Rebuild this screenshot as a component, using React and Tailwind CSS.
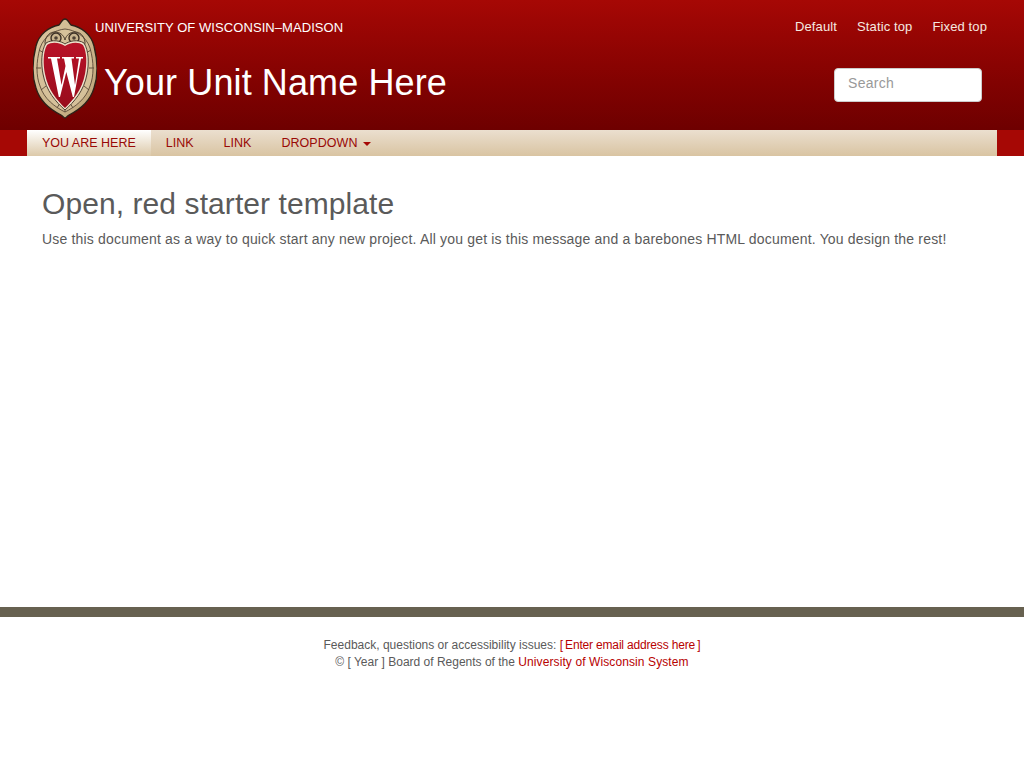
const Crest = () => (
  <svg width="64" height="102" viewBox="0 0 64 102" className="block">
    <defs>
      <linearGradient id="sh" x1="0" y1="0" x2="0" y2="1">
        <stop offset="0" stopColor="#b81228" />
        <stop offset="1" stopColor="#980c1c" />
      </linearGradient>
      <linearGradient id="tan" x1="0" y1="0" x2="1" y2="1">
        <stop offset="0" stopColor="#dcc8a2" />
        <stop offset="1" stopColor="#bda478" />
      </linearGradient>
    </defs>
    <path d="M32 1C29 1 28 5 26 7C16 9 6 16 3 28C-1 44 -1 58 3 70C7 84 18 92 28 97C30 98 31 100 32 100C33 100 34 98 36 97C46 92 57 84 61 70C65 58 65 44 61 28C58 16 48 9 38 7C36 5 35 1 32 1Z" fill="url(#tan)" stroke="#2c2118" strokeWidth="1.3" />
    <path d="M32 11C22 12 11 18 7 30C3 44 3 58 7 68C11 81 22 89 32 94C42 89 53 81 57 68C61 58 61 44 57 30C53 18 42 12 32 11Z" fill="#d6c19a" stroke="#5a4a38" strokeWidth="0.9" />
    <path d="M3 50H8M61 50H56M6 32L11 35M58 32L53 35M8 72L13 68M56 72L51 68M24 90L27 85M40 90L37 85M32 94V89" stroke="#5a4a38" strokeWidth="0.9" fill="none" />
    <path d="M32 22C30 12 14 10 12 24C12 28 14 30 17 30M32 22C34 12 50 10 52 24C52 28 50 30 47 30" fill="none" stroke="#4a3c2d" strokeWidth="1" />
    <circle cx="23" cy="20" r="5" fill="#c9b48e" stroke="#3d3126" strokeWidth="1.4" />
    <circle cx="41" cy="20" r="5" fill="#c9b48e" stroke="#3d3126" strokeWidth="1.4" />
    <circle cx="23" cy="20" r="1.8" fill="#4d4034" />
    <circle cx="41" cy="20" r="1.8" fill="#4d4034" />
    <path d="M32 26C28 23 19 21 13 25C8 33 8 46 10 56C13 73 23 84 32 92C41 84 51 73 54 56C56 46 56 33 51 25C45 21 36 23 32 26Z" fill="#efe4cd" stroke="#3d3126" strokeWidth="0.9" />
    <path d="M32 28C28 25 19 23 14 27C10 34 10 46 12 56C15 72 24 82 32 90C40 82 49 72 52 56C54 46 54 34 50 27C45 23 36 25 32 28Z" fill="url(#sh)" />
    <path d="M15 39H27V40.5H24L28.5 67L32.5 48L31 40.5H29V39H41V40.5H38.5L42 67L46 40.5H43V39H50V40.5H48L41 79H39.8L33.3 54L27 79H25.8L18 40.5H15Z" fill="#ffffff" />
  </svg>
);

export default function App() {
  return (
    <div className="min-h-screen bg-white font-['Liberation_Sans',Arial,sans-serif] text-[#5a5a5a]">
      <header className="h-[130px] bg-gradient-to-b from-[#a60805] to-[#6e0000] flex justify-between">
        <div className="flex items-start pl-[33px] pt-[18px]">
          <Crest />
          <div className="text-white">
            <div className="ml-[-2px] mt-[2px] text-[13px] leading-4 tracking-[0.07px] whitespace-nowrap">UNIVERSITY OF WISCONSIN–MADISON</div>
            <div className="ml-[7px] mt-[27px] text-[36px] leading-[40px] tracking-[0.11px] whitespace-nowrap">Your Unit Name Here</div>
          </div>
        </div>
        <div className="flex flex-col items-end pr-[37px] pt-[19px]">
          <nav className="flex gap-5 text-[13px] leading-4 tracking-[0.12px] text-[#f5e9e0]">
            <span>Default</span>
            <span>Static top</span>
            <span>Fixed top</span>
          </nav>
          <input
            placeholder="Search"
            readOnly
            className="mt-[33px] mr-[5px] w-[148px] h-[34px] rounded border border-[#cccccc] bg-white px-[13px] pb-[4px] text-sm leading-5 tracking-[0.3px] placeholder:text-[#999999] outline-none"
          />
        </div>
      </header>
      <div className="bg-[#a60805] px-[27px]">
        <nav className="h-[26px] bg-gradient-to-b from-[#ebdfcf] to-[#d9c4a2] flex text-[12.5px] leading-[26px] text-[#990806]">
          <a className="px-[15px] bg-gradient-to-b from-[#ffffff] to-[#dcc9a9]">YOU ARE HERE</a>
          <a className="px-[15px]">LINK</a>
          <a className="px-[15px]">LINK</a>
          <a className="px-[15px] flex items-center tracking-[0.05px]">
            DROPDOWN
            <span className="ml-[6px] mt-[2px] w-0 h-0 border-x-4 border-t-4 border-x-transparent border-t-[#a60805]" />
          </a>
        </nav>
      </div>
      <main className="h-[451px] px-[42px] pt-[31px]">
        <h1 className="text-[30px] leading-[33px] tracking-[0.08px]">Open, red starter template</h1>
        <p className="mt-[9px] text-sm leading-5 tracking-[0.18px] whitespace-nowrap">Use this document as a way to quick start any new project. All you get is this message and a barebones HTML document. You design the rest!</p>
      </main>
      <div className="h-[10px] bg-[#676150]" />
      <footer className="pt-[20px] pb-[90px] text-center text-xs leading-[17px]">
        <div>Feedback, questions or accessibility issues: <a className="text-[#b70101] tracking-[-0.17px]">[{"\u2009"}Enter email address here{"\u2009"}]</a></div>
        <div>© [ Year ] Board of Regents of the <a className="text-[#b70101] tracking-[0.1px]">University of Wisconsin System</a></div>
      </footer>
    </div>
  );
}
